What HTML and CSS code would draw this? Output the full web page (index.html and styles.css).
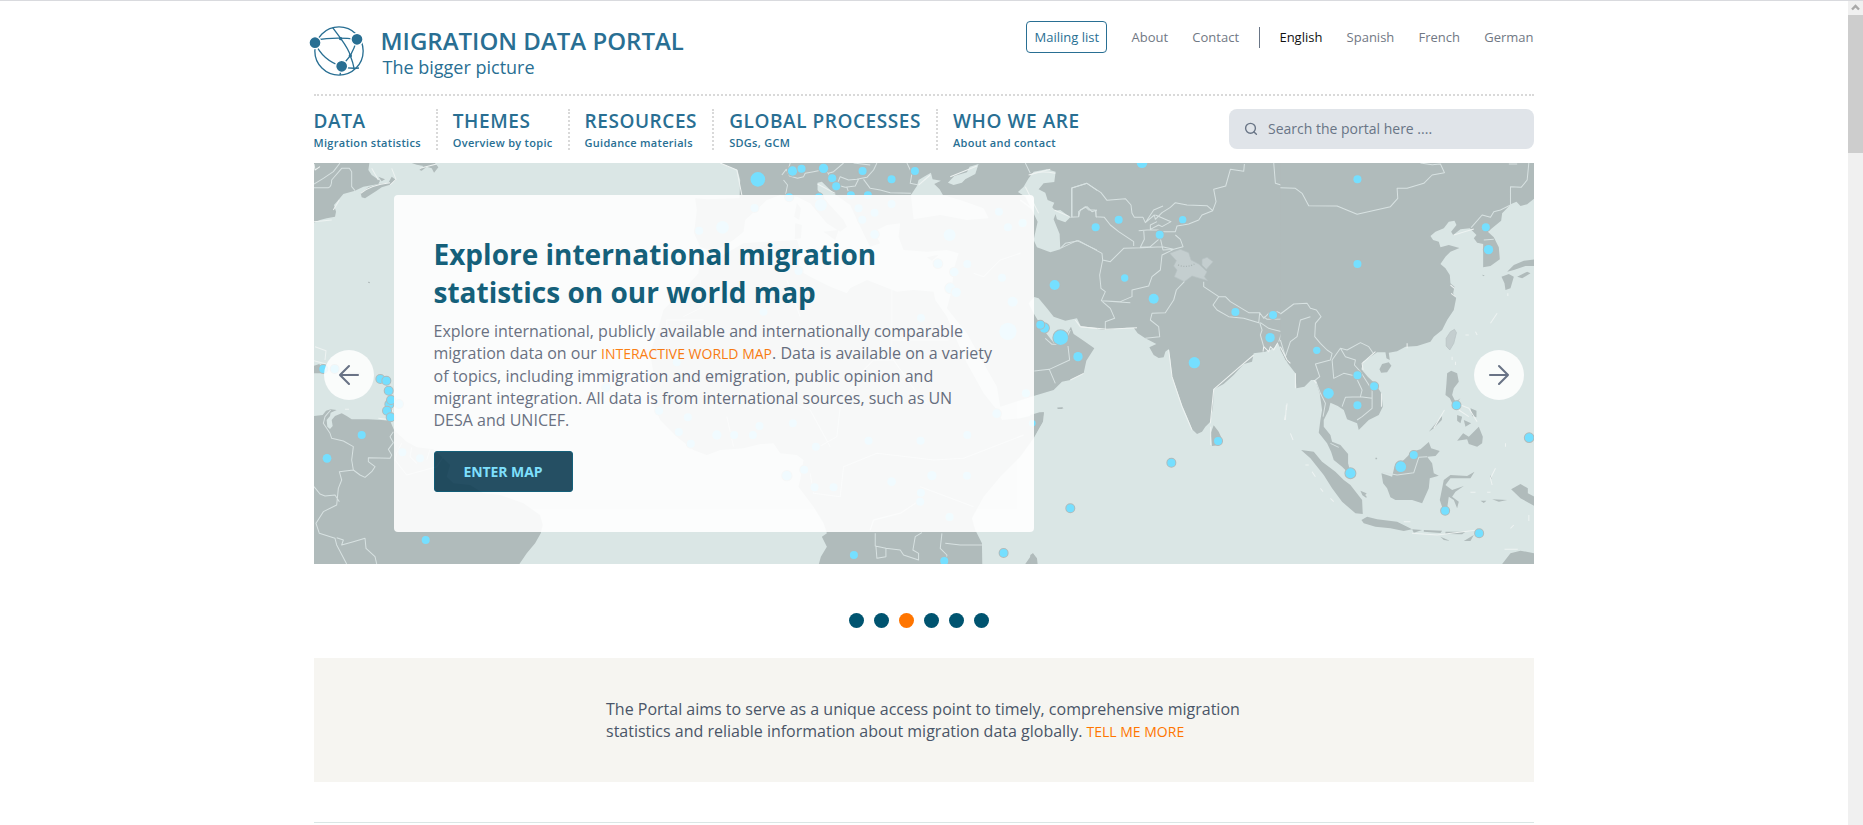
FILE: index.html
```html
<!DOCTYPE html>
<html lang="en">
<head>
<meta charset="utf-8">
<title>Migration Data Portal</title>
<link rel="stylesheet" href="styles.css">
</head>
<body>
<div class="viewport">
<div class="page">
  <header class="masthead">
    <a class="brand">
      <svg class="brand-logo" width="56" height="52" viewBox="0 0 168 156" fill="none" stroke="#296f93" stroke-width="4">
        <circle cx="90" cy="78" r="72.5"/>
        <path d="M18 45Q80 35 144 43M71 8L95 40Q120 75 124 92Q132 112 136 133M18 53Q40 105 98 124M144 43Q136 70 124 92L98 124L93 150M98 124Q120 132 150 129"/>
        <g class="brand-node"><circle cx="18" cy="53" r="18"/><circle cx="144" cy="43" r="18"/><circle cx="98" cy="124" r="18"/></g>
        <g class="brand-dot"><circle cx="95" cy="41" r="5"/><circle cx="124" cy="92" r="5"/></g>
      </svg>
      <span class="brand-words"><strong class="brand-name">MIGRATION DATA PORTAL</strong><span class="brand-tag">The bigger picture</span></span>
    </a>
    <nav class="toplinks">
      <a class="mailing">Mailing list</a><a>About</a><a>Contact</a><span class="rule"></span><a class="current">English</a><a>Spanish</a><a>French</a><a>German</a>
    </nav>
  </header>
  <div class="menubar">
    <nav class="menu">
      <a class="item"><span class="item-title">DATA</span><span class="item-sub">Migration statistics</span></a>
      <a class="item"><span class="item-title">THEMES</span><span class="item-sub">Overview by topic</span></a>
      <a class="item"><span class="item-title">RESOURCES</span><span class="item-sub">Guidance materials</span></a>
      <a class="item"><span class="item-title">GLOBAL PROCESSES</span><span class="item-sub">SDGs, GCM</span></a>
      <a class="item"><span class="item-title">WHO WE ARE</span><span class="item-sub">About and contact</span></a>
    </nav>
    <div class="search">
      <svg width="14" height="14" viewBox="0 0 14 14" fill="none" stroke="#697586" stroke-width="1.4" stroke-linecap="round"><circle cx="6.5" cy="6.3" r="4.9"/><path d="M10 10l2.4 2.3"/></svg>
      <span>Search the portal here ....</span>
    </div>
  </div>

  <section class="banner">
    <svg class="map" width="1220" height="401" viewBox="0 0 1220 401" preserveAspectRatio="none">
      <g transform="translate(-4 -3) scale(.33333)">
        <g class="land">
          <path d="M12 9H178L175 30 185 45 210 62 205 72 160 80 135 92 100 102 85 120 72 135 78 155 75 170 50 175 30 180 12 188Z"/>
          <path d="M152 100L175 82 205 72 235 68 245 50 258 60 240 74 215 82 200 92 180 105 165 115 155 112ZM305 9H375L385 22 372 38 365 25 350 20 335 32 328 30 340 18 320 14ZM205 50L225 58 215 64ZM12 640H40V636L28 612 12 617Z"/>
          <path d="M12 768L38 765 48 752 62 748 80 750 62 758 60 768 50 780 52 800 60 807 68 798 65 780 75 768 95 760 110 768 125 778 175 778 215 780 240 782 252 810 262 820 290 845 320 862 370 868 395 890 420 915 410 950 430 970 480 975 520 1000 570 1005 640 1030 690 1065 698 1095 692 1120 675 1150 650 1180 628 1212H12Z"/>
          <path d="M115 638h35v4h-35zM174 365l6 1-1 4-5-2zM205 785l20-2-5 8-14 2z"/>
        </g>
        <g class="border">
          <path d="M12 83H55Q65 80 65 60L95 25H118L125 35V80L135 92M12 72L40 55 70 35 90 9M62 750L45 770 40 790 60 820 65 835 100 843 130 860 125 900 130 930 150 945 165 952 185 935 195 920 175 905V893L240 895 245 885 235 868 250 848 240 830 250 815M130 930L88 935 95 960 85 985 80 1035 40 1055 18 1090 28 1120 75 1135 80 1155 110 1212M80 1133L100 1140 95 1155 130 1145 165 1135 168 1165 195 1190 200 1212M12 980L30 1002 45 1008 75 1005 88 1025M275 850L260 880 255 900 290 945 380 920 400 890M305 862L300 890 320 910M360 868L350 900"/>
          <path class="shore" d="M245 25L258 58 240 75M152 100Q180 75 240 68M65 180L12 185M88 120L70 150M15 560L48 572 45 600M12 602L48 612M105 748h12M205 775L245 780M240 765l8-15M12 12L15 30 30 20M185 25L205 60M330 25L380 12"/>
        </g>
      </g>

      <g transform="translate(386 -3) scale(.33333)">
        <g class="land">
          <path d="M60 9L85 20 112 30 120 60 118 115 20 118-15 115-10 150-18 220 0 260 40 275 100 240 130 215 135 180 200 120 240 105 290 110 330 130 380 190 420 215 440 200 430 180 375 120 352 90V68L365 65 400 100 450 135 475 190 510 260 540 250 520 215 560 195 600 190 595 230 610 270 680 275 740 270 775 280 760 330 755 390 740 445 800 520 850 610 890 680 900 740 1000 708 1060 690 1085 665 1110 660 1150 640 1158 602 1182 565 1150 542 1120 522 1112 500 1095 530 1080 552 1060 548 1030 510 1000 460 985 430 1002 411 1015 415 1040 445 1060 470 1095 482 1130 475 1142 500 1205 507V9Z"/>
          <path d="M-5 340L-50 390-90 430-110 450-130 520-150 580-140 640-150 680-145 720-120 780-70 830-20 870 20 885 60 870 130 865 180 852 220 850 240 880 290 885 310 900 300 960 295 980 340 1040 370 1090 380 1120 365 1130 380 1160 362 1190 356 1212H846L845 1150 825 1110 815 1075 850 1010 900 950 960 890 1000 835 1025 790 1030 757 1000 765 960 775 905 780 890 750 850 700 800 610 760 520 740 470 705 420 700 395 640 390 590 395 500 360 450 385 440 400 390 380 330 350 295 330 300 270 290 240 200 245 130 250 60 290 0 280Z"/>
          <path d="M975 1212L990 1190 998 1180 1008 1200 1010 1212ZM290 130l12 15-5 35-15-10zM285 190l20 5-3 40-18 2zM370 215l45-5-10 30zM680 292l35-8-20 18zM1070 743l16-1 4 3-15 2z"/>
        </g>
        <g class="sea">
          <path d="M632 105L650 78 655 60 675 48 692 38 697 58 722 62 702 72 718 88 728 105 780 120 850 145 865 175 800 180 720 165 640 178ZM743 68L762 48 800 37 808 20 835 12 825 42 795 58 785 68 760 75Z"/>
          <path d="M953 96L970 80 985 55 1000 35 1040 28 1066 35 1062 66 1030 70 1015 88 1035 98 1042 120 1062 128 1056 142 1068 156 1060 178 1078 222 1080 268 1050 277 1010 262 1000 240 1012 185 995 150 975 110ZM1063 152L1080 150 1110 172 1095 187 1070 178Z"/>
        </g>
        <g class="border">
          <path d="M245 45L258 28 268 48 292 55 310 50 315 40 340 35 365 30 385 40 400 35 430 9M270 9L262 35M385 40L390 65 410 75 420 50 445 60 470 58 500 52 520 30 530 9M410 75L435 82 465 78 475 58M440 82L450 110M490 58L510 85 540 90 570 98 632 100M620 9L635 40 630 70 655 75M510 15L460 9M250 60L262 75 255 110M975 9L990 40M1000 150L960 120M1115 170V84L1160 70 1200 98M1110 172L1135 170 1140 150 1160 140 1175 155 1190 150V172L1205 172M1080 265L1130 242 1200 275M1035 535L1055 553 1090 553 1110 510M1103 558L1108 600 1047 628 1002 633M1047 628L1065 670M525 1120V1158L557 1165V1190L530 1195 527 1158M557 1165L600 1170 610 1185 655 1200V1180L638 1170 645 1130 665 1118M735 1150L780 1155 845 1155M725 1120L720 1165 740 1185 735 1212M575 380V600M575 540H745M-100 500V480H10M0 360L10 440-50 470M260 360L300 470M820 340L850 350 900 300 960 280M330 940L340 1000 420 1010 430 920 530 880 620 890 700 900 790 895 970 825M660 980L820 1040M340 870L410 830 420 740 480 640 520 600 580 600 650 700 680 730M80 770L100 860M200 700L330 750 390 860M510 1110L520 1080 600 1060 660 1020"/>
          <path class="shore" d="M60 9L110 30 125 105M352 72L405 100M655 75L690 45M750 50L830 18M985 45L1050 28M975 80L1015 160M1142 500L1200 507M1110 660L1150 640M1062 150L1108 170"/>
        </g>
      </g>

      <g transform="translate(716 -3) scale(.33333)">
        <g class="land">
          <path d="M200 9H785V612L765 600 750 565 742 548 730 565 705 575 670 580 665 605 640 612 610 645 580 672 550 688 548 740 540 785 525 800 515 815 500 822 485 808 470 770 455 735 440 692 425 650 420 600 415 567 405 575 400 592 385 594 370 585 357 562 378 552 345 535 322 520 310 503 290 503 225 510 200 507Z"/>
          <path d="M545 858L541 820 550 796 565 815 576 840 570 855ZM0 765L28 757H41L38 785 25 805 10 832 0 845ZM0 1212V1185L8 1180 20 1195 22 1212ZM82 743h14v4h-14z"/>
        </g>
        <path class="disputed" d="M418 280L450 268 475 278 482 300 505 312 530 335 522 350 532 362 485 348 462 365 432 350 440 330 430 318 438 302ZM515 298L530 292 548 305 528 328 515 315Z"/>
        <path class="ceasefire" d="M443 315Q470 325 492 312"/>
        <g class="border">
          <path d="M124 170V84L170 70 212 98 230 121 285 116 302 135 305 160 312 172H338L345 188 372 165 375 178 395 158 420 142 435 128 470 135 530 137 547 152 557 125 550 88 586 78 600 28 640 34 642 12M145 170V155L165 140 175 150 195 150 197 170 222 172 240 195 265 215 310 245V258M345 188L370 150 398 138M375 165L422 185 395 200 385 195 360 208V195L380 185M547 152L515 165 505 180 475 192 440 198 435 215 395 215M340 210L342 238 330 262 360 260 385 238M325 212L350 210 385 210M390 235L398 270 430 268 458 260 450 238 435 225M90 265L105 250 145 242 215 280 217 300 240 305 280 265 335 263 395 260 430 268 395 285 390 330 365 350 355 378 305 390V410L270 425 213 422M217 300L208 345 212 385 225 395 213 422 240 445 253 475 225 485V510M213 422L300 428M520 365V380L565 410 548 435 560 450 595 470 640 475 685 488 688 458 655 458 600 425 585 410 565 410M462 365L438 390 430 420 405 458 365 460 360 480 385 500 388 530 345 535M688 458L700 475 715 460 740 455 755 462 752 477 710 478 700 470M688 488L695 510 690 525 700 560M690 488L715 505 755 515 745 545M752 460L780 440M730 9L735 70 780 84"/>
          <path class="shore" d="M0 45Q25 30 75 40M135 480L150 500 230 508 290 505 320 503M415 570L425 650 455 740 485 810M540 790L550 688 640 610 670 585M698 575L700 560 715 575 720 560 730 570 742 548M541 800V855M770 730L768 750M762 780L765 765"/>
        </g>
      </g>

      <g transform="translate(966 -3) scale(.33333)">
        <g class="land">
          <path d="M0 9H762V115L740 133 720 138 708 125 692 132 665 160 662 182 640 200 622 215 640 232 655 262 658 298 630 318 608 322 608 252 590 248 580 235 588 225 568 205 540 208 518 225 512 215 528 195 522 182 505 185 490 205 465 215 450 228 458 240 475 245 480 262 505 255 537 264 510 275 495 290 480 312 495 325 508 345 510 370 522 380 518 400 527 415 520 450 500 480 485 510 460 530 450 545 410 558 375 560 350 574 325 578 328 600 318 595 315 577 290 577 270 590 248 605 243 628 262 650 285 672 303 700 307 740 295 765 265 780 235 810 230 790 200 778 190 750 172 738 150 728 145 750 130 780 130 800 150 825 155 845 180 855 203 882 203 910 212 945 200 935 185 920 160 900 152 875 140 850 115 818 120 780 125 750 118 700 105 660 92 660 72 680 48 685 45 640 22 610 0 570Z"/>
          <path d="M62 870L100 875 125 905 165 935 190 960 210 975 245 1020 247 1062 225 1060 185 1025 155 985 130 945 90 895ZM243 1080L260 1070 290 1078 350 1085 395 1108 370 1113 330 1105 285 1100 250 1090ZM303 940L335 950 342 920 370 900 395 875 420 868 445 846 452 865 478 873 465 888 440 890 455 910 460 940 475 947 448 955 445 985 425 1030 395 1020 345 1020 330 1012 320 985 308 970Z"/>
          <path d="M490 960L510 945 560 948 582 935 570 955 510 955 495 975 515 990 550 978 525 995 515 1010 535 1025 530 1045 520 1020 505 1010 500 1045 488 1050 478 1020ZM500 640L512 632 530 640 535 665 520 685 515 705 525 725 540 715 520 740 508 715 495 705 498 670ZM565 830L580 815 595 800 607 830 605 850 590 860 565 852 560 838 530 842 548 820ZM530 765L545 770 540 790 530 782ZM570 745L588 752V772L575 768ZM550 780L572 790 555 800ZM445 815L470 785 485 768 484 780 460 805ZM297 628L305 612 325 607 333 617 320 637 302 638ZM663 350L685 342 700 350 690 385 675 390 672 370ZM680 335L700 315 730 302 762 298V318L735 318 700 330ZM710 350L740 335 750 340 725 355ZM692 988L720 972 742 985V1000L762 1010V1038L720 1015ZM665 1212L690 1180 720 1172 762 1180V1212ZM635 1018L680 1020 655 1025ZM550 1143L580 1125 570 1143ZM480 1130L508 1142 490 1140ZM600 1022h18l-8 7zM240 992l18 8v14l-12-8zM605 344l8 2-5 3zM285 893h5v5h-5zM395 1108l30 2-25 8zM430 1110l55 2-5 7-50-4zM495 1115h60l-10 8-50-1zM630 945l4 10-5 3z"/>
        </g>
        <path class="disputed" d="M497 535L510 515 522 508 528 518 520 550 508 570 497 558Z"/>
        <g class="border">
          <path d="M420 9L455 14 480 12 492 38 455 45 430 70 380 85 350 85 352 115 330 140 230 163 170 138 85 137 65 100 45 85 0 83M685 12H710M745 9L740 60 722 82 690 80V135L660 150 640 155 630 172 605 165 572 203M610 240L640 238M0 462L40 432 80 430 90 445 108 450 122 470 105 490 103 530 120 550 140 570 155 580 150 600 105 612 118 650 105 660 120 700 135 730 128 770M90 470L60 480 50 530 30 545 15 590 0 540M155 600L160 655 190 640 225 648 245 690 240 710 195 712 185 740M155 600L180 565 200 570 240 548 265 560 280 582M180 565L195 590 225 600 222 615 240 635 275 690 275 745 245 770 230 780M240 710L275 715M305 937L350 945 400 938 415 892 440 890M150 850L175 862"/>
          <path class="shore" d="M580 207L520 225M510 375L522 385M512 400L525 410M303 700V740M0 560L20 600 30 610M45 640V685M100 660L108 670M248 630L245 610 285 575M380 565V550M460 805L492 750M540 735L565 745 590 785M535 750L565 770M645 925L630 955 635 975M255 1005h5M395 1120L470 1125 590 1110M75 915H85M95 935L105 950M120 985L128 995M150 1015L160 1025M18 735L15 780M30 820L38 840M650 460L630 490M700 1095L690 1105M672 1168h40M682 400V408M555 525h10M585 515L590 525M745 1065v18M675 860V850M515 590v10M525 605v10M370 1085h20M570 997h15M620 997h10"/>
        </g>
      </g>

      <g class="pins" transform="translate(-4 -3) scale(.33333)">
        <circle cx="40" cy="627" r="12"/><circle cx="74" cy="627" r="12"/><circle cx="211" cy="657" r="12"/><circle cx="229" cy="662" r="12"/><circle cx="236" cy="692" r="12"/><circle cx="238" cy="733" r="12"/><circle cx="243" cy="720" r="12"/><circle cx="231" cy="752" r="12"/><circle cx="242" cy="772" r="12"/><circle cx="267" cy="732" r="12"/><circle cx="155" cy="825" r="12"/><circle cx="51" cy="895" r="13"/><circle cx="347" cy="1140" r="12"/><circle cx="277" cy="877" r="12"/><circle cx="330" cy="895" r="12"/><circle cx="888" cy="682" r="12"/><circle cx="1167" cy="212" r="12"/><circle cx="1100" cy="607" r="12"/><circle cx="1047" cy="752" r="12"/><circle cx="1133" cy="772" r="12"/><circle cx="1106" cy="816" r="12"/><circle cx="1142" cy="851" r="12"/>
      </g>
      <g class="pins" transform="translate(386 -3) scale(.33333)">
        <circle cx="173" cy="58" r="22"/><circle cx="277" cy="33" r="14"/><circle cx="304" cy="26" r="12"/><circle cx="370" cy="25" r="14"/><circle cx="396" cy="55" r="12"/><circle cx="408" cy="79" r="12"/><circle cx="487" cy="33" r="12"/><circle cx="574" cy="58" r="12"/><circle cx="644" cy="33" r="12"/><circle cx="452" cy="106" r="12"/><circle cx="503" cy="106" r="12"/><circle cx="267" cy="112" r="12"/><circle cx="356" cy="112" r="12"/><circle cx="362" cy="135" r="18"/><circle cx="163" cy="144" r="12"/><circle cx="67" cy="202" r="19"/><circle cx="475" cy="145" r="12"/><circle cx="523" cy="158" r="12"/><circle cx="486" cy="179" r="12"/><circle cx="574" cy="132" r="12"/><circle cx="523" cy="223" r="13"/><circle cx="748" cy="225" r="18"/><circle cx="896" cy="155" r="12"/><circle cx="923" cy="202" r="12"/><circle cx="967" cy="189" r="12"/><circle cx="713" cy="311" r="13"/><circle cx="762" cy="336" r="13"/><circle cx="801" cy="312" r="12"/><circle cx="750" cy="385" r="15"/><circle cx="768" cy="397" r="14"/><circle cx="905" cy="353" r="12"/><circle cx="937" cy="425" r="15"/><circle cx="923" cy="514" r="26"/><circle cx="662" cy="474" r="12"/><circle cx="295" cy="333" r="12"/><circle cx="190" cy="455" r="12"/><circle cx="977" cy="700" r="12"/><circle cx="889" cy="761" r="13"/><circle cx="996" cy="790" r="10"/><circle cx="278" cy="790" r="12"/><circle cx="178" cy="798" r="12"/><circle cx="50" cy="825" r="14"/><circle cx="102" cy="825" r="12"/><circle cx="158" cy="825" r="12"/><circle cx="347" cy="860" r="12"/><circle cx="505" cy="842" r="12"/><circle cx="661" cy="842" r="12"/><circle cx="801" cy="825" r="12"/><circle cx="312" cy="929" r="12"/><circle cx="260" cy="947" r="14"/><circle cx="343" cy="982" r="12"/><circle cx="400" cy="982" r="12"/><circle cx="574" cy="965" r="13"/><circle cx="695" cy="947" r="14"/><circle cx="800" cy="947" r="12"/><circle cx="662" cy="998" r="12"/><circle cx="660" cy="1025" r="12"/><circle cx="748" cy="1071" r="12"/><circle cx="461" cy="1185" r="12"/><circle cx="732" cy="1203" r="12"/><circle cx="910" cy="1179" r="12"/>
      </g>
      <g class="pins" transform="translate(716 -3) scale(.33333)">
        <circle cx="335" cy="8" r="16"/><circle cx="265" cy="179" r="12"/><circle cx="196" cy="202" r="12"/><circle cx="457" cy="179" r="11"/><circle cx="388" cy="224" r="12"/><circle cx="283" cy="354" r="11"/><circle cx="73" cy="375" r="15"/><circle cx="370" cy="416" r="15"/><circle cx="42" cy="504" r="14"/><circle cx="30" cy="494" r="12"/><circle cx="91" cy="533" r="22"/><circle cx="143" cy="590" r="14"/><circle cx="492" cy="608" r="17"/><circle cx="615" cy="456" r="12"/><circle cx="728" cy="465" r="12"/><circle cx="719" cy="533" r="14"/><circle cx="563" cy="843" r="12"/><circle cx="423" cy="908" r="12"/><circle cx="120" cy="1045" r="12"/>
      </g>
      <g class="pins" transform="translate(966 -3) scale(.33333)">
        <circle cx="231" cy="58" r="12"/><circle cx="231" cy="312" r="12"/><circle cx="616" cy="202" r="12"/><circle cx="624" cy="269" r="14"/><circle cx="109" cy="571" r="11"/><circle cx="231" cy="646" r="12"/><circle cx="281" cy="679" r="12"/><circle cx="144" cy="700" r="16"/><circle cx="231" cy="736" r="12"/><circle cx="528" cy="736" r="12"/><circle cx="400" cy="885" r="12"/><circle cx="361" cy="920" r="16"/><circle cx="210" cy="940" r="15"/><circle cx="746" cy="833" r="13"/><circle cx="494" cy="1052" r="12"/><circle cx="596" cy="1120" r="12"/>
      </g>
    </svg>
    <a class="arrow prev"><svg width="22" height="22" viewBox="0 0 22 22"><path d="M20 11H2M11 2L2 11L11 20"/></svg></a>
    <article class="panel">
      <h1>Explore international migration statistics on our world map</h1>
      <p>Explore international, publicly available and internationally comparable<br>migration data on our <a class="inline-link">INTERACTIVE WORLD MAP</a>. Data is available on a variety<br>of topics, including immigration and emigration, public opinion and<br>migrant integration. All data is from international sources, such as UN<br>DESA and UNICEF.</p>
      <a class="button">ENTER MAP</a>
    </article>
    <a class="arrow next"><svg width="22" height="22" viewBox="0 0 22 22"><path d="M2 11H20M11 2L20 11L11 20"/></svg></a>
  </section>

  <div class="pager"><i></i><i></i><i class="on"></i><i></i><i></i><i></i></div>

  <section class="intro">
    <p>The Portal aims to serve as a unique access point to timely, comprehensive migration<br>statistics and reliable information about migration data globally. <a class="inline-link">TELL ME MORE</a></p>
  </section>
  <div class="divider"></div>
</div>
<div class="scrollbar"><svg width="15" height="14" viewBox="0 0 15 14" fill="none" stroke="#a9a9a9" stroke-width="2.4"><path d="M4 8.5L7.5 5L11 8.5"/></svg><div class="thumb"></div></div>
</div>
</body>
</html>
```
FILE: styles.css
```css
* { box-sizing: border-box; }
body { margin: 0; font-family: "Open Sans", "Noto Sans", sans-serif; background: #fff; color: #697080; }
h1, p { margin: 0; }
.viewport { display: flex; height: 825px; overflow: hidden; border-top: 1px solid #d9dade; }
.page { width: 1220.5px; margin: 0 auto 0 313.5px; flex: none; }

.masthead { display: flex; justify-content: space-between; height: 95px; border-bottom: 2px dotted #d9d9d9; }
.brand { display: flex; margin-left: -4.5px; padding-top: 24px; color: #296f93; }
.brand-logo { flex: none; }
.brand-node { fill: #296f93; stroke: #fff; }
.brand-dot { fill: #296f93; stroke: none; }
.brand-words { display: flex; flex-direction: column; margin-left: 15.5px; }
.brand-name { font-size: 24px; line-height: 32px; font-weight: 600; white-space: nowrap; }
.brand-tag { font-size: 18px; line-height: 24px; margin: -2px 0 0 2px; }
.toplinks { display: flex; align-items: center; height: 32px; margin: 20px .5px 0 0; gap: 24.2px; font-size: 13px; color: #717884; }
.mailing { height: 32px; width: 81px; line-height: 30px; text-align: center; border: 1px solid #296f93; border-radius: 4px; color: #296f93; }
.rule { width: 1px; height: 21px; background: #697586; margin: 0 -5px 0 -4px; }
.current { color: #111; }

.menubar { display: flex; justify-content: space-between; height: 67px; padding-top: 13px; }
.menu { display: flex; height: 41px; color: #296f93; }
.item { display: flex; flex-direction: column; padding: 0 15px; border-right: 2px dotted #d9d9d9; white-space: nowrap; }
.item:first-child { padding-left: 0; }
.item:last-child { border: 0; }
.item-title { margin-top: -1px; font-size: 19px; line-height: 27px; font-weight: 600; letter-spacing: .57px; }
.item-sub { font-size: 11px; line-height: 15px; font-weight: 600; letter-spacing: .29px; }
.search { display: flex; align-items: center; gap: 10px; width: 305px; height: 40px; padding: 0 0 1px 15px; border-radius: 8px; background: #e0e4e9; font-size: 14px; color: #697586; }

.banner { position: relative; display: flex; align-items: flex-start; height: 401px; padding-top: 32px; }
.map { position: absolute; inset: 0; display: block; width: 100%; background: #dae6e5; }
.land { fill: #b0bbbb; }
.sea { fill: #dae6e5; }
.disputed { fill: #c4cecf; stroke: #b7c1c2; stroke-width: 2; }
.ceasefire { fill: none; stroke: #a8b2b2; stroke-width: 4; stroke-dasharray: 3 5; }
.border { fill: none; stroke: #d8e2e2; stroke-width: 3; stroke-linejoin: round; }
.shore { stroke: #eef3f2; }
.pins { fill: #75dfff; stroke: #b0bbbb; stroke-width: 6; paint-order: stroke; }
.panel { position: relative; width: 640px; height: 337px; margin-left: 80px; padding: 40px; border-radius: 4px; background: #fff; opacity: .9; }
.panel h1 { width: 480px; font-size: 28px; line-height: 38px; font-weight: 700; color: #00526f; }
.panel p { margin-top: 9px; font-size: 16px; line-height: 22px; white-space: nowrap; color: #5d6577; }
.inline-link { font-size: 14px; color: #ff7500; }
.button { display: block; width: 139px; height: 41px; margin-top: 20px; border: 1px solid #00526f; border-radius: 3px; background: #123f55; color: #75dfff; font-size: 14px; line-height: 39px; font-weight: 700; letter-spacing: -.1px; text-align: center; }
.arrow { position: absolute; top: 187px; display: grid; place-items: center; width: 50px; height: 50px; border-radius: 50%; background: rgba(255, 255, 255, .85); }
.arrow path { fill: none; stroke: #697386; stroke-width: 2.1; stroke-linecap: round; stroke-linejoin: round; }
.prev { left: 10px; }
.next { right: 10px; }

.pager { display: flex; gap: 10px; height: 94px; padding: 49px 0 0 535px; }
.pager i { width: 15px; height: 15px; border-radius: 50%; background: #005470; }
.pager .on { background: #ff7500; }
.intro { height: 124px; padding: 40px 0 0 292.5px; background: #f6f5f1; color: #4a5568; font-size: 16px; line-height: 22px; white-space: nowrap; }
.divider { margin-top: 40px; border-top: 1px solid #dae6e5; }

.scrollbar { flex: none; width: 15px; background: #f0f0f0; }
.scrollbar svg { display: block; }
.thumb { height: 138px; background: #cdcdcd; }
```
